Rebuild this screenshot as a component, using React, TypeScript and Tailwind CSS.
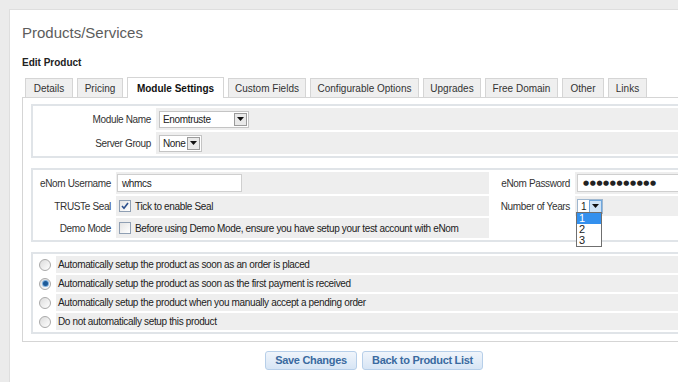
const tabs = [
  { label: "Details", w: "w-[48px]" },
  { label: "Pricing", w: "w-[46px]" },
  { label: "Module Settings", w: "w-[97px]", active: true },
  { label: "Custom Fields", w: "w-[78px]" },
  { label: "Configurable Options", w: "w-[109px]" },
  { label: "Upgrades", w: "w-[58px]" },
  { label: "Free Domain", w: "w-[73px]" },
  { label: "Other", w: "w-[42px]" },
  { label: "Links", w: "w-[39px]" },
];

const setupOptions = [
  "Automatically setup the product as soon as an order is placed",
  "Automatically setup the product as soon as the first payment is received",
  "Automatically setup the product when you manually accept a pending order",
  "Do not automatically setup this product",
];

const Arrow = ({ focus }: { focus?: boolean }) => (
  <div
    className={`flex h-[13px] w-[13px] items-center justify-center border ${
      focus ? "border-[#6fa7dd] bg-[#cfe3f6]" : "border-[#9b9b9b] bg-[#e9e9e9]"
    }`}
  >
    <svg width="7" height="4" viewBox="0 0 7 4">
      <path d="M0 0h7L3.5 4z" fill="#111" />
    </svg>
  </div>
);

const Select = ({ value, w, focus }: { value: string; w: string; focus?: boolean }) => (
  <div className={`flex h-[17px] ${w} items-center border border-[#c4c4c4] bg-white pl-[3px] pr-[1px]`}>
    <span className="flex-1 truncate">{value}</span>
    <Arrow focus={focus} />
  </div>
);

const Checkbox = ({ checked }: { checked?: boolean }) => (
  <div className="flex h-[12px] w-[12px] items-center justify-center border border-[#8f9fb3] bg-gradient-to-br from-[#e4e4e4] to-white">
    {checked && (
      <svg width="8" height="8" viewBox="0 0 8 8">
        <path d="M1 4l2 2.2L7 1" stroke="#2b4f8c" strokeWidth="1.6" fill="none" />
      </svg>
    )}
  </div>
);

const Radio = ({ checked }: { checked?: boolean }) => (
  <div className="flex h-[12px] w-[12px] items-center justify-center rounded-full border border-[#a9a9a9] bg-gradient-to-br from-[#dcdcdc] to-white">
    {checked && <div className="h-[5px] w-[5px] rounded-full bg-[#1d5a97] ring-1 ring-[#7fb0de]" />}
  </div>
);

const Label = ({ w, children }: { w: string; children?: React.ReactNode }) => (
  <div className={`${w} flex shrink-0 items-center justify-end pr-[3px] text-[#333]`}>{children}</div>
);

export default function App() {
  return (
    <div className="h-[382px] w-[678px] overflow-hidden bg-[#ebebeb] font-['Liberation_Sans',Arial,sans-serif] text-[10px] tracking-[-0.35px] text-[#222]">
      <div className="ml-[9px] mt-[9px] h-[400px] w-[730px] border border-[#dedede] bg-white px-[12px] pt-[14px]">
        <h1 className="text-[15px] leading-[18px] tracking-normal text-[#5c5c5c]">Products/Services</h1>
        <h2 className="mt-[15px] text-[10px] leading-[12px] font-bold tracking-normal text-[#222]">Edit Product</h2>

        {/* tabs */}
        <div className="mt-[8px] flex items-end gap-[4px] pl-[3px] tracking-normal">
          {tabs.map((t) =>
            t.active ? (
              <div
                key={t.label}
                className={`${t.w} relative z-10 -mb-px flex h-[21px] items-center justify-center border border-b-0 border-[#d5d5d5] bg-white font-bold text-[#111]`}
              >
                {t.label}
              </div>
            ) : (
              <div
                key={t.label}
                className={`${t.w} flex h-[19px] items-center justify-center border border-b-0 border-[#d5d5d5] bg-[#efefef] text-[#333]`}
              >
                {t.label}
              </div>
            )
          )}
        </div>

        <div className="border border-[#d5d5d5] px-[8px] pt-[6px] pb-[7px]">
          {/* module */}
          <div className="flex flex-col gap-[2px] border-2 border-[#e0e4e8] p-[2px]">
            <div className="flex h-[22px] gap-[2px]">
              <Label w="w-[119px]">Module Name</Label>
              <div className="flex flex-1 items-center bg-[#eeeeee] pl-[3px]">
                <Select value="Enomtruste" w="w-[90px]" />
              </div>
            </div>
            <div className="flex h-[22px] gap-[2px]">
              <Label w="w-[119px]">Server Group</Label>
              <div className="flex flex-1 items-center bg-[#eeeeee] pl-[3px]">
                <Select value="None" w="w-[43px]" />
              </div>
            </div>
          </div>

          {/* enom settings */}
          <div className="mt-[10px] flex flex-col gap-[2px] border-2 border-[#e0e4e8] p-[2px]">
            <div className="flex h-[22px] gap-[2px]">
              <Label w="w-[79px]">eNom Username</Label>
              <div className="flex w-[373px] items-center bg-[#eeeeee] pl-[1px]">
                <div className="flex h-[18px] w-[125px] items-center border border-[#cfcfcf] bg-white pl-[4px]">whmcs</div>
              </div>
              <Label w="w-[82px]">eNom Password</Label>
              <div className="flex flex-1 items-center bg-[#eeeeee] pl-[2px]">
                <div className="flex h-[18px] flex-1 items-center border border-[#cfcfcf] bg-white pl-[5px] font-['DejaVu_Sans',sans-serif] text-[7px] tracking-[0.6px]">
                  ●●●●●●●●●●●
                </div>
              </div>
            </div>
            <div className="flex h-[20px] gap-[2px]">
              <Label w="w-[79px]">TRUSTe Seal</Label>
              <div className="flex w-[373px] items-center gap-[4px] bg-[#eeeeee] pl-[3px]">
                <Checkbox checked />
                <span>Tick to enable Seal</span>
              </div>
              <Label w="w-[82px]">Number of Years</Label>
              <div className="relative flex flex-1 items-center bg-[#eeeeee] pl-[2px]">
                <div className="flex h-[15px] w-[26px] items-center border border-[#9fb7cf] bg-white pl-[3px]">
                  <span className="flex-1">1</span>
                  <Arrow focus />
                </div>
                {/* open dropdown list */}
                <div className="absolute left-[1px] top-[16px] z-20 flex w-[26px] flex-col border border-[#6f6f6f] bg-white text-[11px] leading-[11px] tracking-normal">
                  <span className="bg-[#3390ee] pl-[2px] text-white">1</span>
                  <span className="pl-[2px]">2</span>
                  <span className="pl-[2px]">3</span>
                </div>
              </div>
            </div>
            <div className="flex h-[20px] gap-[2px]">
              <Label w="w-[79px]">Demo Mode</Label>
              <div className="flex w-[373px] items-center gap-[4px] bg-[#eeeeee] pl-[3px]">
                <Checkbox />
                <span>Before using Demo Mode, ensure you have setup your test account with eNom</span>
              </div>
              <div className="flex-1" />
            </div>
          </div>

          {/* auto setup */}
          <div className="mt-[10px] flex flex-col gap-[2px] border-2 border-[#e0e4e8] p-[2px]">
            {setupOptions.map((opt, i) => (
              <div key={opt} className="flex h-[17px] gap-[2px]">
                <div className="flex w-[19px] shrink-0 items-center justify-center pl-[1px]">
                  <Radio checked={i === 1} />
                </div>
                <div className="flex flex-1 items-center bg-[#eeeeee] pl-[2px]">{opt}</div>
              </div>
            ))}
          </div>
        </div>

        <div className="mt-[9px] flex justify-center gap-[5px] text-[11px] font-bold tracking-[-0.3px] text-[#3a6aa0]">
          <button className="h-[19px] w-[92px] rounded-[3px] border border-[#b7cfe9] bg-gradient-to-b from-[#f0f5fb] to-[#d7e5f5]">
            Save Changes
          </button>
          <button className="h-[19px] w-[121px] rounded-[3px] border border-[#b7cfe9] bg-gradient-to-b from-[#f0f5fb] to-[#d7e5f5]">
            Back to Product List
          </button>
        </div>
      </div>
    </div>
  );
}
